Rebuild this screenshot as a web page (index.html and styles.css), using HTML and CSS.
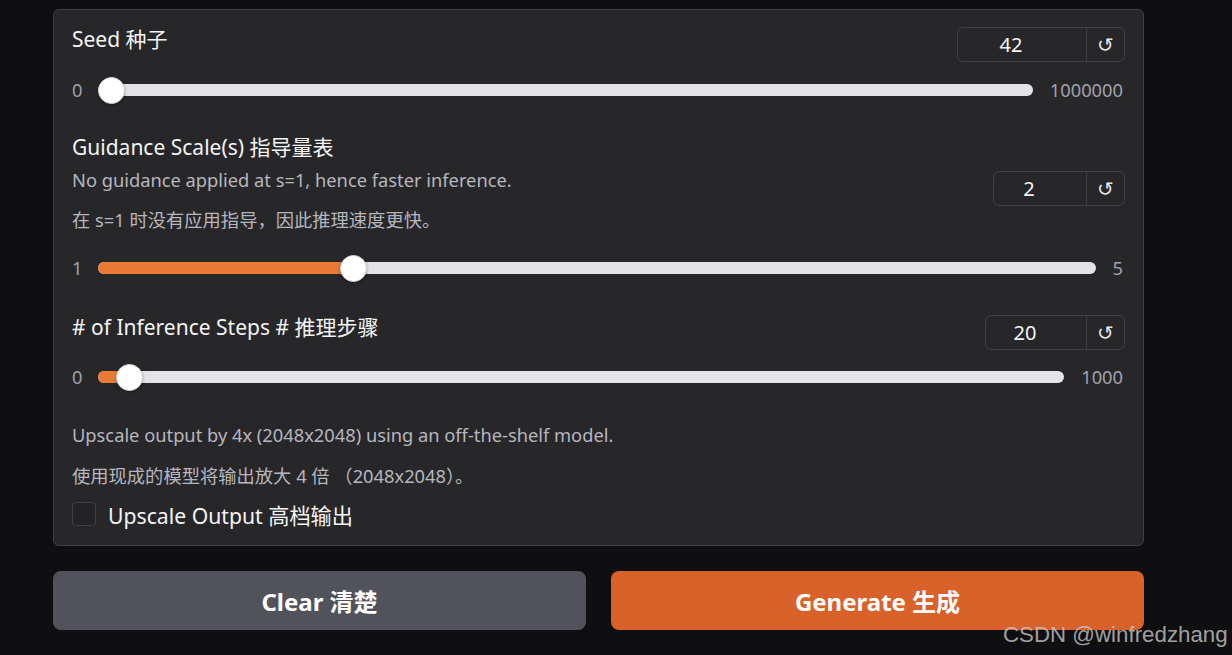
FILE: index.html
```html
<!DOCTYPE html>
<html>
<head>
<meta charset="utf-8">
<link rel="stylesheet" href="styles.css">
</head>
<body>
<div class="page">
  <div class="panel">
    <div class="section sec-seed">
      <div class="head">
        <div class="label">Seed 种子</div>
        <div class="numbox nb-seed"><span class="num">42</span><span class="reset">↺</span></div>
      </div>
      <div class="slider-row">
        <span class="minmax">0</span>
        <div class="track"><div class="fill" style="width: calc(13.5px + 0.000042 * (100% - 27px))"></div><div class="thumb" style="left: calc(0.000042 * (100% - 27px))"></div></div>
        <span class="minmax">1000000</span>
      </div>
    </div>

    <div class="section sec-guid">
      <div class="head">
        <div class="left">
          <div class="label">Guidance Scale(s) 指导量表</div>
          <p class="info first">No guidance applied at s=1, hence faster inference.</p>
          <p class="info">在 s=1 时没有应用指导，因此推理速度更快。</p>
        </div>
        <div class="numbox nb-guid"><span class="num">2</span><span class="reset">↺</span></div>
      </div>
      <div class="slider-row">
        <span class="minmax">1</span>
        <div class="track"><div class="fill" style="width: calc(13.5px + 0.25 * (100% - 27px))"></div><div class="thumb" style="left: calc(0.25 * (100% - 27px))"></div></div>
        <span class="minmax">5</span>
      </div>
    </div>

    <div class="section sec-steps">
      <div class="head">
        <div class="label"># of Inference Steps # 推理步骤</div>
        <div class="numbox nb-steps"><span class="num">20</span><span class="reset">↺</span></div>
      </div>
      <div class="slider-row">
        <span class="minmax">0</span>
        <div class="track"><div class="fill" style="width: calc(13.5px + 0.02 * (100% - 27px))"></div><div class="thumb" style="left: calc(0.02 * (100% - 27px))"></div></div>
        <span class="minmax">1000</span>
      </div>
    </div>

    <div class="section sec-up">
      <p class="info">Upscale output by 4x (2048x2048) using an off-the-shelf model.</p>
      <p class="info second">使用现成的模型将输出放大 4 倍 （2048x2048）。</p>
      <label class="check-row"><span class="checkbox"></span><span class="check-label">Upscale Output 高档输出</span></label>
    </div>
  </div>

  <div class="buttons">
    <button class="btn btn-clear">Clear 清楚</button>
    <button class="btn btn-gen">Generate 生成</button>
  </div>
</div>
<div class="watermark">CSDN @winfredzhang</div>
</body>
</html>
```

FILE: styles.css
```css
* { box-sizing: border-box; }
html, body { margin: 0; padding: 0; }
body {
  background: #0f0f11;
  font-family: "Noto Sans", "Noto Sans CJK SC", sans-serif;
  color: #f4f4f5;
  width: 1232px;
  height: 655px;
  overflow: hidden;
  position: relative;
}
.page {
  padding: 9px 0 0 53px;
  width: 1144px;
}
.panel {
  background: #27272a;
  border: 1px solid #3f3f46;
  border-radius: 6px;
  padding: 15px 18px 15px 18px;
  height: 537px;
}
.head {
  display: flex;
  justify-content: space-between;
  align-items: flex-start;
}
.label {
  font-size: 21px;
  line-height: 28px;
  color: #f4f4f5;
}
.info {
  margin: 0;
  font-size: 18.3px;
  line-height: 24px;
  color: #b6b6be;
}
.info.first { margin-top: 7px; }
.info + .info { margin-top: 16px; }
.numbox {
  display: flex;
  height: 35px;
  border: 1px solid #3f3f46;
  border-radius: 6px;
  margin-top: 2px;
}
.num {
  flex: 1;
  display: flex;
  align-items: center;
  justify-content: center;
  padding-right: 22px;
  font-size: 20px;
  color: #f4f4f5;
}
.reset {
  width: 38px;
  border-left: 1px solid #3f3f46;
  display: flex;
  align-items: center;
  justify-content: center;
  font-family: "DejaVu Sans", sans-serif;
  font-size: 20px;
  color: #e4e4e7;
}
.nb-seed { width: 168px; }
.nb-guid { width: 132px; margin-top: 38px; }
.nb-steps { width: 140px; }

.slider-row {
  display: flex;
  align-items: center;
  height: 28px;
  margin-right: 2px;
}
.minmax {
  font-size: 18.3px;
  color: #a1a1aa;
  line-height: 28px;
}
.track {
  position: relative;
  flex: 1;
  height: 12px;
  border-radius: 6px;
  background: #e4e4e7;
  margin: 0 17px 0 16px;
}
.fill {
  position: absolute;
  left: 0;
  top: 0;
  bottom: 0;
  background: #e87a35;
  border-radius: 6px;
}
.thumb {
  position: absolute;
  top: 50%;
  width: 27px;
  height: 27px;
  margin-top: -13.5px;
  margin-left: -1px;
  border-radius: 50%;
  background: #ffffff;
  border: 1px solid #d4d4d8;
  box-shadow: 0 1px 3px rgba(0,0,0,0.35);
}
.sec-seed .slider-row { margin-top: 14px; }
.sec-guid { margin-top: 29px; }
.sec-guid .slider-row { margin-top: 22px; }
.sec-steps { margin-top: 31px; }
.sec-steps .slider-row { margin-top: 13px; }
.sec-up { margin-top: 32px; }
.sec-up .info.second { margin-top: 17px; }

.check-row {
  display: flex;
  align-items: center;
  height: 28px;
  margin-top: 12px;
}
.checkbox {
  width: 24px;
  height: 24px;
  border: 1px solid #3f3f46;
  border-radius: 4px;
  background: #232326;
  margin-right: 12px;
}
.check-label {
  font-size: 21.2px;
  color: #f4f4f5;
}

.buttons {
  display: flex;
  gap: 25px;
  margin-top: 25px;
}
.btn {
  flex: 1;
  height: 59px;
  border: none;
  border-radius: 8px;
  font-family: "Noto Sans", "Noto Sans CJK SC", sans-serif;
  font-weight: bold;
  font-size: 24px;
  color: #ffffff;
}
.btn-clear { background: #52525b; }
.btn-gen { background: #d9622b; }

.watermark {
  position: absolute;
  left: 1003px;
  top: 620px;
  font-family: "Liberation Sans", sans-serif;
  font-size: 22.3px;
  line-height: 30px;
  color: rgba(200, 200, 200, 0.8);
  white-space: nowrap;
}
```
